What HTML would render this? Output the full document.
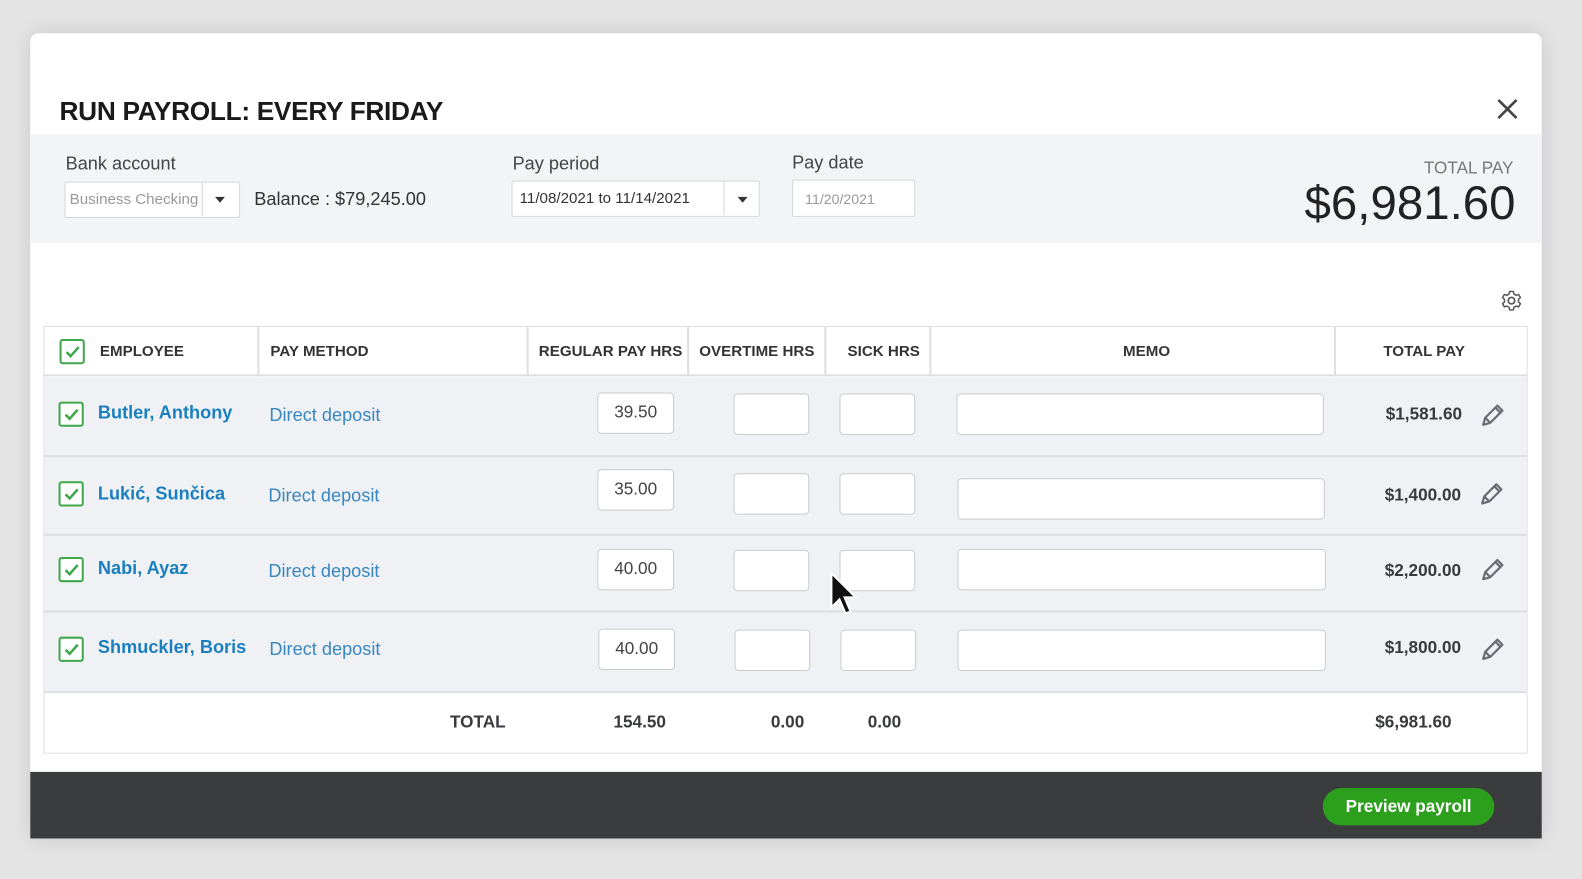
<!DOCTYPE html>
<html><head><meta charset="utf-8"><style>
*{box-sizing:border-box;margin:0;padding:0}
body{width:1582px;height:871px;background:#e4e4e5;font-family:"Liberation Sans",sans-serif;color:#393a3d;position:relative;overflow:hidden}
#wrap{position:absolute;left:0;top:0;width:1582px;height:871px;transform:scale(1.009);transform-origin:0 0}
.modal{position:absolute;left:30px;top:33px;width:1498px;height:798px;background:#fff;border-radius:8px 8px 0 0;box-shadow:0 0 20px rgba(0,0,0,.12)}
.abs{position:absolute}
h1{position:absolute;left:29px;top:62px;font-size:26px;font-weight:bold;color:#1a1a1a;letter-spacing:-.3px}
.band{position:absolute;left:0;top:100px;width:1498px;height:108px;background:#f3f4f6}
.lbl{font-size:18px;color:#444}
.box{position:absolute;background:#fff;border:1.5px solid #d4d7dc;border-radius:2px}
.inp{position:absolute;background:#fff;border:1.5px solid #c8cbd0;border-radius:4px;height:41px}
.th{position:absolute;top:0;height:49px;line-height:49px;font-size:15px;color:#333;font-weight:bold}
.cb{position:absolute;width:25px;height:25px;border:2px solid #3fa84a;border-radius:3px;background:#fff}
.cb svg{position:absolute;left:3px;top:3px}
.name{position:absolute;font-size:18px;font-weight:bold;color:#1a7fbf}
.dd{position:absolute;font-size:18px;color:#3787c0}
.num{position:absolute;font-size:17px;color:#444;text-align:center}
.amt{position:absolute;font-size:17px;font-weight:bold;color:#393a3d;text-align:right;width:120px}
</style></head><body><div id="wrap">
<div class="modal">
<h1>RUN PAYROLL: EVERY FRIDAY</h1>
<svg class="abs" style="left:1453px;top:64px" width="22" height="22" viewBox="0 0 22 22"><path d="M2 2L20 20M20 2L2 20" stroke="#444" stroke-width="2.6"/></svg>
<div class="band">
 <div class="abs lbl" style="left:35px;top:19px">Bank account</div>
 <div class="box" style="left:34px;top:47px;width:174px;height:36px"><span class="abs" style="left:4px;top:8px;font-size:15px;color:#999">Business Checking</span><div class="abs" style="left:135px;top:0;width:1px;height:33px;background:#d4d7dc"></div><svg class="abs" style="left:148px;top:14px" width="10" height="6"><path d="M0 0H10L5 6Z" fill="#333"/></svg></div>
 <div class="abs" style="left:222px;top:54px;font-size:18px;color:#333">Balance : $79,245.00</div>
 <div class="abs lbl" style="left:478px;top:19px">Pay period</div>
 <div class="box" style="left:477px;top:46px;width:246px;height:36px"><span class="abs" style="left:7px;top:8px;font-size:15px;color:#333">11/08/2021 to 11/14/2021</span><div class="abs" style="left:209px;top:0;width:1px;height:33px;background:#d4d7dc"></div><svg class="abs" style="left:223px;top:15px" width="10" height="6"><path d="M0 0H10L5 6Z" fill="#333"/></svg></div>
 <div class="abs lbl" style="left:755px;top:18px">Pay date</div>
 <div class="box" style="left:755px;top:45px;width:122px;height:37px"><span class="abs" style="left:12px;top:10px;font-size:14px;color:#999">11/20/2021</span></div>
 <div class="abs" style="right:28px;top:24px;font-size:17px;color:#777">TOTAL PAY</div>
 <div class="abs" style="right:26px;top:40px;font-size:47px;color:#222">$6,981.60</div>
</div>
<svg class="abs" style="left:1457px;top:254px" width="22" height="22" viewBox="0 0 24 24"><circle cx="12" cy="12" r="3.5" fill="none" stroke="#555" stroke-width="1.8"/><path d="M10 2h4l.6 2.8 2.4 1.4 2.7-.9 2 3.4-2.1 1.9v2.8l2.1 1.9-2 3.4-2.7-.9-2.4 1.4L14 22h-4l-.6-2.8-2.4-1.4-2.7.9-2-3.4 2.1-1.9v-2.8L2.3 8.7l2-3.4 2.7.9 2.4-1.4z" fill="none" stroke="#555" stroke-width="1.6" stroke-linejoin="round"/></svg>
<div class="abs" style="left:13px;top:290px;width:1471px;height:424px;border:1.5px solid #dcdee2">
 <div class="abs" style="left:0;top:0;width:100%;height:49px;border-bottom:2px solid #dcdee2"></div>
 <div class="abs" style="left:211px;top:0;width:1.5px;height:49px;background:#dcdee2"></div>
 <div class="abs" style="left:478px;top:0;width:1.5px;height:49px;background:#dcdee2"></div>
 <div class="abs" style="left:637px;top:0;width:1.5px;height:49px;background:#dcdee2"></div>
 <div class="abs" style="left:773px;top:0;width:1.5px;height:49px;background:#dcdee2"></div>
 <div class="abs" style="left:877px;top:0;width:1.5px;height:49px;background:#dcdee2"></div>
 <div class="abs" style="left:1278px;top:0;width:1.5px;height:49px;background:#dcdee2"></div>
 <div class="cb" style="left:15px;top:12px"><svg width="16" height="16"><path d="M2 8l4 4 8-9" stroke="#3fa84a" stroke-width="2.5" fill="none"/></svg></div>
 <div class="th" style="left:55px">EMPLOYEE</div>
 <div class="th" style="left:224px">PAY METHOD</div>
 <div class="th" style="left:490px">REGULAR PAY HRS</div>
 <div class="th" style="left:649px">OVERTIME HRS</div>
 <div class="th" style="left:796px">SICK HRS</div>
 <div class="th" style="left:1069px">MEMO</div>
 <div class="th" style="left:1327px">TOTAL PAY</div>
 <div class="abs" style="left:0;top:50px;width:100%;height:311px;background:#f0f1f4"></div>
 <div class="abs" style="left:0;top:127px;width:100%;height:1.5px;background:#dcdee2"></div>
 <div class="abs" style="left:0;top:205px;width:100%;height:1.5px;background:#dcdee2"></div>
 <div class="abs" style="left:0;top:281px;width:100%;height:1.5px;background:#dcdee2"></div>
 <div class="abs" style="left:0;top:361px;width:100%;height:1.5px;background:#dcdee2"></div>
</div>
</div>
<div class="abs" style="left:30px;top:765px;width:1498px;height:66px;background:#3b3c3e"></div>
<div class="abs" style="left:1311px;top:781px;width:170px;height:37px;background:#2ca01c;border-radius:19px;color:#fff;font-size:17px;font-weight:bold;text-align:center;line-height:37px">Preview payroll</div>
<div class="abs" style="left:446px;top:706px;font-size:17px;font-weight:bold;color:#393a3d">TOTAL</div>
<div class="abs" style="left:608px;top:706px;font-size:17px;font-weight:bold">154.50</div>
<div class="abs" style="left:764px;top:706px;font-size:17px;font-weight:bold">0.00</div>
<div class="abs" style="left:860px;top:706px;font-size:17px;font-weight:bold">0.00</div>
<div class="abs" style="left:1363px;top:706px;font-size:17px;font-weight:bold">$6,981.60</div>

<div class="cb" style="left:58px;top:398px"><svg width="16" height="16"><path d="M2 8l4 4 8-9" stroke="#3fa84a" stroke-width="2.5" fill="none"/></svg></div>
<div class="name" style="left:97px;top:399px">Butler, Anthony</div>
<div class="dd" style="left:267px;top:401px">Direct deposit</div>
<div class="inp" style="left:592px;top:389px;width:76px"><div class="num" style="width:100%;top:9px">39.50</div></div>
<div class="inp" style="left:727px;top:390px;width:75px"></div>
<div class="inp" style="left:832px;top:390px;width:75px"></div>
<div class="inp" style="left:948px;top:390px;width:364px"></div>
<div class="amt" style="left:1329px;top:401px">$1,581.60</div>

<div class="cb" style="left:58px;top:477px"><svg width="16" height="16"><path d="M2 8l4 4 8-9" stroke="#3fa84a" stroke-width="2.5" fill="none"/></svg></div>
<div class="name" style="left:97px;top:479px">Lukić, Sunčica</div>
<div class="dd" style="left:266px;top:481px">Direct deposit</div>
<div class="inp" style="left:592px;top:465px;width:76px"><div class="num" style="width:100%;top:9px">35.00</div></div>
<div class="inp" style="left:727px;top:469px;width:75px"></div>
<div class="inp" style="left:832px;top:469px;width:75px"></div>
<div class="inp" style="left:949px;top:474px;width:364px"></div>
<div class="amt" style="left:1328px;top:481px">$1,400.00</div>

<div class="cb" style="left:58px;top:552px"><svg width="16" height="16"><path d="M2 8l4 4 8-9" stroke="#3fa84a" stroke-width="2.5" fill="none"/></svg></div>
<div class="name" style="left:97px;top:553px">Nabi, Ayaz</div>
<div class="dd" style="left:266px;top:556px">Direct deposit</div>
<div class="inp" style="left:592px;top:544px;width:76px"><div class="num" style="width:100%;top:9px">40.00</div></div>
<div class="inp" style="left:727px;top:545px;width:75px"></div>
<div class="inp" style="left:832px;top:545px;width:75px"></div>
<div class="inp" style="left:949px;top:544px;width:365px"></div>
<div class="amt" style="left:1328px;top:556px">$2,200.00</div>

<div class="cb" style="left:58px;top:631px"><svg width="16" height="16"><path d="M2 8l4 4 8-9" stroke="#3fa84a" stroke-width="2.5" fill="none"/></svg></div>
<div class="name" style="left:97px;top:631px">Shmuckler, Boris</div>
<div class="dd" style="left:267px;top:633px">Direct deposit</div>
<div class="inp" style="left:593px;top:623px;width:76px"><div class="num" style="width:100%;top:9px">40.00</div></div>
<div class="inp" style="left:728px;top:624px;width:75px"></div>
<div class="inp" style="left:833px;top:624px;width:75px"></div>
<div class="inp" style="left:949px;top:624px;width:365px"></div>
<div class="amt" style="left:1328px;top:632px">$1,800.00</div>

<svg class="abs" style="left:1465px;top:398px" width="28" height="28" viewBox="0 0 28 28"><path d="M5 23l2-7L19 4l5 5-12 12z M7 16l5 5 M17 6l5 5" fill="none" stroke="#6b6c72" stroke-width="2.2" stroke-linejoin="round"/></svg>
<svg class="abs" style="left:1464px;top:476px" width="28" height="28" viewBox="0 0 28 28"><path d="M5 23l2-7L19 4l5 5-12 12z M7 16l5 5 M17 6l5 5" fill="none" stroke="#6b6c72" stroke-width="2.2" stroke-linejoin="round"/></svg>
<svg class="abs" style="left:1465px;top:551px" width="28" height="28" viewBox="0 0 28 28"><path d="M5 23l2-7L19 4l5 5-12 12z M7 16l5 5 M17 6l5 5" fill="none" stroke="#6b6c72" stroke-width="2.2" stroke-linejoin="round"/></svg>
<svg class="abs" style="left:1465px;top:630px" width="28" height="28" viewBox="0 0 28 28"><path d="M5 23l2-7L19 4l5 5-12 12z M7 16l5 5 M17 6l5 5" fill="none" stroke="#6b6c72" stroke-width="2.2" stroke-linejoin="round"/></svg>
<svg class="abs" style="left:822px;top:566px" width="30" height="46" viewBox="0 0 30 46"><path d="M2 2V36L10 28L16 42L21 40L15 26H26Z" fill="#111" stroke="#fff" stroke-width="2"/></svg>
</div></body></html>
